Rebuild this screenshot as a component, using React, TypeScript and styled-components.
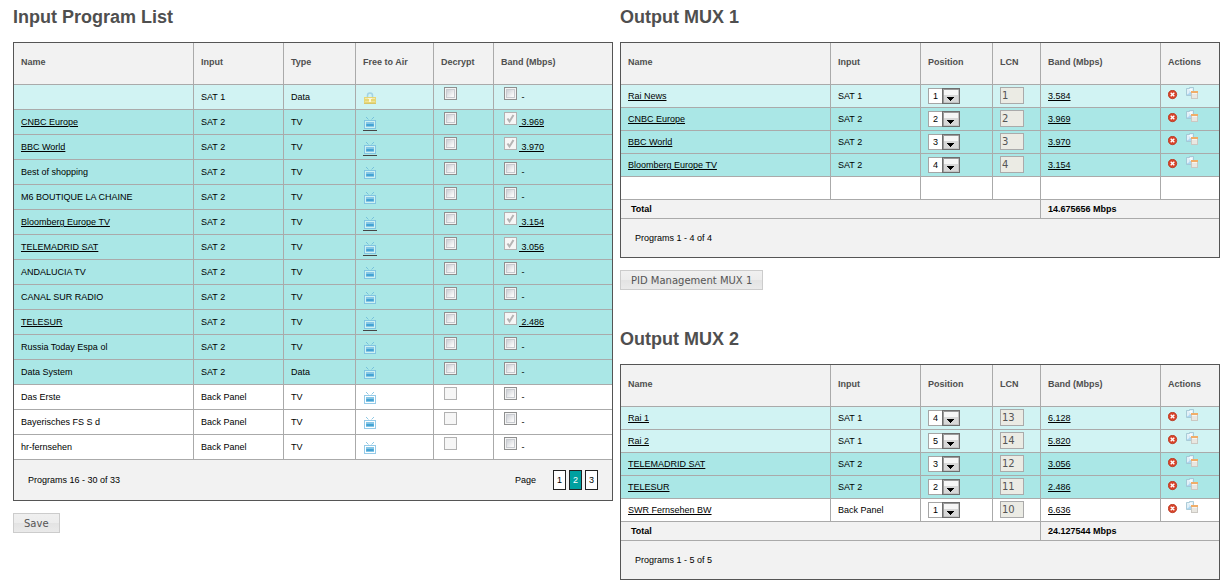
import React from 'react';
import styled, { createGlobalStyle } from 'styled-components';

const GlobalStyle = createGlobalStyle`
  * { box-sizing: border-box; }
  body {
    margin: 0;
    background: #fff;
    color: #000;
    font-family: "Liberation Sans", Arial, sans-serif;
    font-size: 9px;
    line-height: 12px;
  }
`;

type Tone = 'light' | 'dark' | 'plain';

const tones: Record<Tone, string> = {
  light: '#d1f3f3',
  dark: '#aae7e6',
  plain: '#ffffff',
};

const Page = styled.main`
  display: grid;
  grid-template-columns: repeat(2, minmax(0, 1fr));
  column-gap: 7px;
  align-items: start;
  padding: 6px 5px 2px 13px;
`;

const Outputs = styled.div`
  display: flex;
  flex-direction: column;
  gap: 38px;
`;

const Panel = styled.section`
  display: flex;
  flex-direction: column;
  align-items: flex-start;
`;

const Title = styled.h2`
  margin: 0 0 14px;
  color: #4f4f4f;
  font-size: 18px;
  line-height: 22px;
`;

const Table = styled.table`
  width: 100%;
  table-layout: fixed;
  border: 1px solid #555;
  border-collapse: separate;
  border-spacing: 0;
`;

const Col = styled.col<{ $width?: number }>`
  width: ${(p) => (p.$width ? `${p.$width}px` : 'auto')};
`;

const HeadCell = styled.th`
  height: 42px;
  padding: 0 7px 3px;
  border-right: 1px solid #aaa;
  border-bottom: 1px solid #aaa;
  background: #f2f2f2;
  color: #4f4f4f;
  text-align: left;
  white-space: nowrap;
  &:last-child { border-right: 0; }
`;

const Row = styled.tr<{ $tone: Tone; $height: number }>`
  height: ${(p) => p.$height}px;
  background: ${(p) => tones[p.$tone]};
`;

const Cell = styled.td`
  padding: 0 7px;
  border-right: 1px solid #aaa;
  border-bottom: 1px solid #aaa;
  white-space: nowrap;
  &:last-child { border-right: 0; }
`;

const TotalCell = styled.td<{ $inset: number }>`
  height: 19px;
  padding: 0 ${(p) => p.$inset}px;
  border-right: 1px solid #aaa;
  border-bottom: 1px solid #aaa;
  background: #f2f2f2;
  font-weight: bold;
  &:last-child { border-right: 0; }
`;

const FooterCell = styled.td<{ $height: number }>`
  height: ${(p) => p.$height}px;
  padding: 0 14px;
  background: #f2f2f2;
`;

const FooterBar = styled.div`
  display: flex;
  align-items: center;
  justify-content: space-between;
`;

const Pager = styled.nav`
  display: flex;
  align-items: center;
  gap: 3px;
`;

const PagerLabel = styled.span`
  margin-right: 14px;
`;

const PageLink = styled.a<{ $active?: boolean }>`
  width: 13px;
  border: 1px solid #222;
  background: ${(p) => (p.$active ? '#00a0a0' : '#fff')};
  color: ${(p) => (p.$active ? '#fff' : '#000')};
  line-height: 18px;
  text-align: center;
  text-decoration: none;
`;

const TextLink = styled.a`
  color: #000;
  white-space: pre;
  text-decoration: underline;
  text-underline-offset: 1px;
`;

const IconLink = styled.a`
  display: block;
  width: 14px;
  padding: 0 1px 1px;
  border-bottom: 1px solid #444;
`;

const IconBox = styled.div`
  height: 24px;
  padding-top: 7px;
  svg { display: block; }
`;

const PlainIcon = styled.span`
  display: block;
  padding: 0 1px;
`;

const CheckLine = styled.div`
  display: flex;
  align-items: flex-start;
  gap: 2px;
  height: 24px;
  padding: 2px 3px 0;
`;

const CheckText = styled.span`
  white-space: pre;
  line-height: 20px;
`;

const CheckHolder = styled.span`
  display: grid;
  flex: none;
  > * { grid-area: 1 / 1; }
  svg { pointer-events: none; }
`;

const CheckInput = styled.input`
  appearance: none;
  width: 13px;
  height: 13px;
  margin: 0;
  padding: 1px;
  border: 1px solid #8e8f8f;
  background: linear-gradient(135deg, #c6c9d0, #f8f8f8 75%) content-box, #f4f4f4;
  box-shadow: inset 0 0 0 1px #f4f4f4, inset 0 0 0 2px #c8cbd0;
  &:disabled {
    border-color: #b1b1b1;
    background: #f6f6f6;
    box-shadow: none;
  }
`;

const SelectHolder = styled.span`
  display: grid;
  width: 32px;
  > * { grid-area: 1 / 1; }
  svg { justify-self: end; pointer-events: none; }
`;

const Select = styled.select`
  appearance: none;
  width: 32px;
  height: 16px;
  margin: 0;
  padding: 0 0 0 4px;
  border: 1px solid #a5a5a5;
  border-radius: 0;
  background: #fff;
  color: #000;
  font: 9px/14px "Liberation Sans", Arial, sans-serif;
`;

const LcnInput = styled.input`
  display: block;
  width: 24px;
  height: 17px;
  margin: 0 0 1px;
  padding: 0 1px;
  border: 1px solid #aaa;
  background: #ebebe4;
  color: #555;
  font: 10px/15px "DejaVu Sans", Verdana, sans-serif;
`;

const Actions = styled.div`
  display: flex;
  align-items: flex-start;
  gap: 8px;
  height: 22px;
  padding-top: 2px;
`;

const ActionButton = styled.button<{ $drop?: boolean }>`
  margin: ${(p) => (p.$drop ? '3px' : '0')} 0 0;
  padding: 0;
  border: 0;
  background: none;
  cursor: pointer;
  svg { display: block; }
`;

const PushButton = styled.button`
  height: 20px;
  margin: 12px 0 0;
  padding: 1px 10px 0;
  border: 1px solid #ccc;
  background: linear-gradient(#f0f0f0, #ececec 50%, #e3e3e3 50%, #eaeaea);
  color: #555;
  font: 10px/17px "DejaVu Sans", Verdana, sans-serif;
`;

const TvIcon = () => (
  <svg width="12" height="12" viewBox="0 0 12 12" aria-hidden="true">
    <path d="M2 0h1v1H2zM9 0h1v1H9zM3 1h1v1H3zM8 1h1v1H8z" fill="#5fb0d8" opacity=".7" />
    <path d="M4 2h1v1H4zM7 2h1v1H7z" fill="#5fb0d8" opacity=".3" />
    <rect x=".5" y="3.5" width="11" height="8" fill="#fff" fillOpacity=".45" stroke="#6bb5de" strokeOpacity=".7" />
    <rect x="2" y="5" width="8" height="5" fill="#86c6e6" />
    <rect x="2" y="7" width="8" height="2" fill="#58aeda" />
    <rect x="3" y="7" width="6" height="2" fill="#45a3d4" />
  </svg>
);

const LockIcon = () => (
  <svg width="12" height="12" viewBox="0 0 12 12" aria-hidden="true">
    <path d="M3.500 5V3.500Q3.500 1 6 1t2.500 2.500V5" fill="none" stroke="#a3d3e3" strokeWidth="1.500" />
    <rect x="0" y="5" width="12" height="7" fill="#e6d777" />
    <rect x="1" y="6" width="10" height="1" fill="#f3eaae" />
    <rect x="1" y="9" width="10" height="1" fill="#efe298" />
    <rect x="4" y="6" width="4" height="1" fill="#fbf6da" />
    <rect x="5" y="7" width="2" height="3" fill="#fbf6da" />
    <rect x="0" y="11" width="12" height="1" fill="#d8c66c" />
  </svg>
);

const DeleteIcon = () => (
  <svg width="10" height="10" viewBox="0 0 10 10" aria-hidden="true">
    <circle cx="4.500" cy="4.500" r="4.200" fill="#d9432a" stroke="#b5371f" strokeWidth=".8" />
    <path d="M2.700 2.700l3.600 3.600M6.300 2.700L2.700 6.300" stroke="#fff" strokeWidth="1.400" />
  </svg>
);

const CopyIcon = () => (
  <svg width="12" height="12" viewBox="0 0 12 12" aria-hidden="true">
    <path d="M.5 1.500h3V.5h4v8h-7z" fill="#e3f1f8" stroke="#9cc0d0" strokeOpacity=".8" />
    <path d="M1 7.500L3.500 6V2.500L6 4v4H1z" fill="#8fc8ec" opacity=".65" />
    <path d="M3 2h3v3H4z" fill="#fff" opacity=".8" />
    <rect x="5.500" y="4.500" width="6" height="7" fill="#e9e7e1" stroke="#cbc8c2" />
    <rect x="5" y="4" width="7" height="2" fill="#f0ad68" />
    <rect x="6" y="6" width="5" height="1" fill="#f8f4ee" />
  </svg>
);

const ArrowFace = () => (
  <svg width="18" height="16" viewBox="0 0 18 16" aria-hidden="true">
    <rect x="1.500" y="1.500" width="15" height="13" fill="#f6f6f6" stroke="#c4c4c4" />
    <rect x="2" y="7" width="14" height="7" fill="#d8d8d8" />
    <rect x=".5" y=".5" width="17" height="15" fill="none" stroke="#6e6e6e" />
    <path d="M1.500 15V1.500H17" fill="none" stroke="#9a9a9a" />
    <path d="M5 9h7v1h-1v1h-1v1H9v1H8v-1H7v-1H6v-1H5z" fill="#000" />
  </svg>
);

interface CheckProps {
  label: string;
  checked?: boolean;
  disabled?: boolean;
}

const Check = ({ label, checked, disabled }: CheckProps) => (
  <CheckHolder>
    <CheckInput type="checkbox" aria-label={label} defaultChecked={checked} disabled={disabled} />
    {checked && (
      <svg width="13" height="13" viewBox="0 0 13 13" aria-hidden="true">
        <path d="M3.500 6.500L5.500 9.500L9.500 3" fill="none" stroke="#b4b4b4" strokeWidth="2" />
      </svg>
    )}
  </CheckHolder>
);

interface Program {
  name: string;
  input: string;
  type: string;
  tone: Tone;
  band?: string;
  locked?: boolean;
}

const programs: Program[] = [
  { name: '', input: 'SAT 1', type: 'Data', tone: 'light', locked: true },
  { name: 'CNBC Europe', input: 'SAT 2', type: 'TV', tone: 'dark', band: '3.969' },
  { name: 'BBC World', input: 'SAT 2', type: 'TV', tone: 'dark', band: '3.970' },
  { name: 'Best of shopping', input: 'SAT 2', type: 'TV', tone: 'dark' },
  { name: 'M6 BOUTIQUE LA CHAINE', input: 'SAT 2', type: 'TV', tone: 'dark' },
  { name: 'Bloomberg Europe TV', input: 'SAT 2', type: 'TV', tone: 'dark', band: '3.154' },
  { name: 'TELEMADRID SAT', input: 'SAT 2', type: 'TV', tone: 'dark', band: '3.056' },
  { name: 'ANDALUCIA TV', input: 'SAT 2', type: 'TV', tone: 'dark' },
  { name: 'CANAL SUR RADIO', input: 'SAT 2', type: 'TV', tone: 'dark' },
  { name: 'TELESUR', input: 'SAT 2', type: 'TV', tone: 'dark', band: '2.486' },
  { name: 'Russia Today Espa ol', input: 'SAT 2', type: 'TV', tone: 'dark' },
  { name: 'Data System', input: 'SAT 2', type: 'Data', tone: 'dark' },
  { name: 'Das Erste', input: 'Back Panel', type: 'TV', tone: 'plain' },
  { name: 'Bayerisches FS S d', input: 'Back Panel', type: 'TV', tone: 'plain' },
  { name: 'hr-fernsehen', input: 'Back Panel', type: 'TV', tone: 'plain' },
];

const ProgramRow = ({ name, input, type, tone, band, locked }: Program) => (
  <Row $tone={tone} $height={25}>
    <Cell>{band ? <TextLink href="#program">{name}</TextLink> : name}</Cell>
    <Cell>{input}</Cell>
    <Cell>{type}</Cell>
    <Cell>
      <IconBox>
        {band ? (
          <IconLink href="#program" aria-label={`${name} details`}><TvIcon /></IconLink>
        ) : (
          <PlainIcon>{locked ? <LockIcon /> : <TvIcon />}</PlainIcon>
        )}
      </IconBox>
    </Cell>
    <Cell>
      <CheckLine>
        <Check label={`Decrypt ${name}`} disabled={tone === 'plain'} />
      </CheckLine>
    </Cell>
    <Cell>
      <CheckLine>
        <Check label={`Select ${name}`} checked={!!band} disabled={!!band} />
        {band ? <TextLink href="#band"><CheckText>{` ${band}`}</CheckText></TextLink> : <CheckText>{' -'}</CheckText>}
      </CheckLine>
    </Cell>
  </Row>
);

interface MuxEntry {
  name: string;
  input: string;
  position: number;
  lcn: string;
  band: string;
  tone: Tone;
}

const MuxRow = ({ name, input, position, lcn, band, tone, count }: MuxEntry & { count: number }) => (
  <Row $tone={tone} $height={23}>
    <Cell><TextLink href="#program">{name}</TextLink></Cell>
    <Cell>{input}</Cell>
    <Cell>
      <SelectHolder>
        <Select aria-label={`Position of ${name}`} defaultValue={position}>
          {Array.from({ length: count }, (_, i) => (
            <option key={i} value={i + 1}>{i + 1}</option>
          ))}
        </Select>
        <ArrowFace />
      </SelectHolder>
    </Cell>
    <Cell><LcnInput type="text" aria-label={`LCN of ${name}`} defaultValue={lcn} disabled /></Cell>
    <Cell><TextLink href="#band">{band}</TextLink></Cell>
    <Cell>
      <Actions>
        <ActionButton $drop type="button" aria-label={`Remove ${name}`}><DeleteIcon /></ActionButton>
        <ActionButton type="button" aria-label={`Copy ${name}`}><CopyIcon /></ActionButton>
      </Actions>
    </Cell>
  </Row>
);

interface MuxProps {
  title: string;
  entries: MuxEntry[];
  rows: number;
  total: string;
  summary: string;
  button?: string;
}

const muxHeads = ['Name', 'Input', 'Position', 'LCN', 'Band (Mbps)', 'Actions'];

const MuxPanel = ({ title, entries, rows, total, summary, button }: MuxProps) => (
  <Panel>
    <Title>{title}</Title>
    <Table>
      <colgroup>
        <Col /><Col $width={90} /><Col $width={72} /><Col $width={48} /><Col $width={120} /><Col $width={58} />
      </colgroup>
      <thead>
        <tr>{muxHeads.map((h) => <HeadCell key={h} scope="col">{h}</HeadCell>)}</tr>
      </thead>
      <tbody>
        {entries.map((e) => <MuxRow key={e.name} {...e} count={entries.length} />)}
        {Array.from({ length: rows - entries.length }, (_, i) => (
          <Row key={i} $tone="plain" $height={23}>
            {muxHeads.map((h) => <Cell key={h} />)}
          </Row>
        ))}
      </tbody>
      <tfoot>
        <tr>
          <TotalCell colSpan={4} $inset={10}>Total</TotalCell>
          <TotalCell colSpan={2} $inset={7}>{total}</TotalCell>
        </tr>
        <tr><FooterCell colSpan={6} $height={38}>{summary}</FooterCell></tr>
      </tfoot>
    </Table>
    {button && <PushButton type="button">{button}</PushButton>}
  </Panel>
);

const mux1: MuxEntry[] = [
  { name: 'Rai News', input: 'SAT 1', position: 1, lcn: '1', band: '3.584', tone: 'light' },
  { name: 'CNBC Europe', input: 'SAT 2', position: 2, lcn: '2', band: '3.969', tone: 'dark' },
  { name: 'BBC World', input: 'SAT 2', position: 3, lcn: '3', band: '3.970', tone: 'dark' },
  { name: 'Bloomberg Europe TV', input: 'SAT 2', position: 4, lcn: '4', band: '3.154', tone: 'dark' },
];

const mux2: MuxEntry[] = [
  { name: 'Rai 1', input: 'SAT 1', position: 4, lcn: '13', band: '6.128', tone: 'light' },
  { name: 'Rai 2', input: 'SAT 1', position: 5, lcn: '14', band: '5.820', tone: 'light' },
  { name: 'TELEMADRID SAT', input: 'SAT 2', position: 3, lcn: '12', band: '3.056', tone: 'dark' },
  { name: 'TELESUR', input: 'SAT 2', position: 2, lcn: '11', band: '2.486', tone: 'dark' },
  { name: 'SWR Fernsehen BW', input: 'Back Panel', position: 1, lcn: '10', band: '6.636', tone: 'plain' },
];

export default function App() {
  return (
    <>
      <GlobalStyle />
      <Page>
        <Panel>
          <Title>Input Program List</Title>
          <Table>
            <colgroup>
              <Col /><Col $width={90} /><Col $width={72} /><Col $width={78} /><Col $width={60} /><Col $width={118} />
            </colgroup>
            <thead>
              <tr>
                {['Name', 'Input', 'Type', 'Free to Air', 'Decrypt', 'Band (Mbps)'].map((h) => (
                  <HeadCell key={h} scope="col">{h}</HeadCell>
                ))}
              </tr>
            </thead>
            <tbody>
              {programs.map((p) => <ProgramRow key={p.name} {...p} />)}
            </tbody>
            <tfoot>
              <tr>
                <FooterCell colSpan={6} $height={40}>
                  <FooterBar>
                    <span>Programs 16 - 30 of 33</span>
                    <Pager aria-label="Pages">
                      <PagerLabel>Page</PagerLabel>
                      <PageLink href="#1">1</PageLink>
                      <PageLink href="#2" $active aria-current="page">2</PageLink>
                      <PageLink href="#3">3</PageLink>
                    </Pager>
                  </FooterBar>
                </FooterCell>
              </tr>
            </tfoot>
          </Table>
          <PushButton type="button">Save</PushButton>
        </Panel>
        <Outputs>
          <MuxPanel title="Output MUX 1" entries={mux1} rows={5} total="14.675656 Mbps" summary="Programs 1 - 4 of 4" button="PID Management MUX 1" />
          <MuxPanel title="Output MUX 2" entries={mux2} rows={5} total="24.127544 Mbps" summary="Programs 1 - 5 of 5" />
        </Outputs>
      </Page>
    </>
  );
}
